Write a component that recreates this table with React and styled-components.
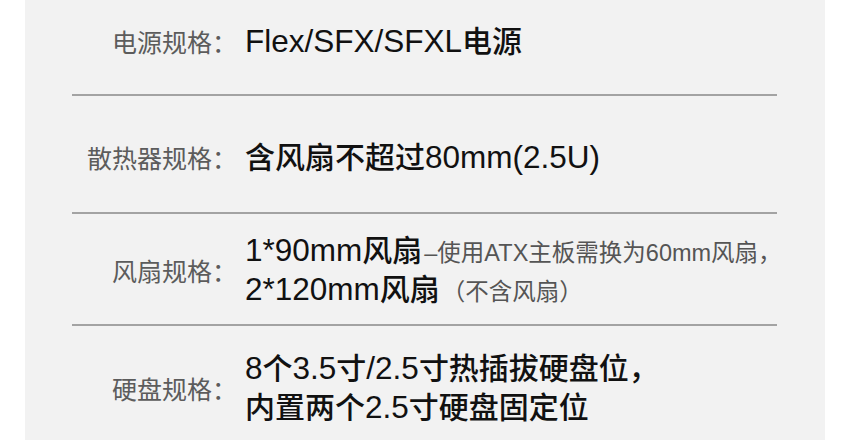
import React from 'react';
import styled, { createGlobalStyle } from 'styled-components';

const GlobalStyle = createGlobalStyle`
    html, body {
        margin: 0;
        padding: 0;
        background: #ffffff;
        height: 440px;
        overflow: hidden;
    }
`;

const Panel = styled.div`
    margin-left: 25px;
    width: 800px;
    height: 440px;
    overflow: hidden;
    background: #f2f2f2;
    padding: 0 48px 0 47px;
    box-sizing: border-box;
    font-family: "Liberation Sans", "Noto Sans CJK SC", sans-serif;
`;

const Row = styled.div`
    display: flex;
    align-items: center;
    padding: ${(p) => p.$top}px 0 ${(p) => p.$bottom}px;
`;

const Label = styled.div`
    width: 165px;
    flex-shrink: 0;
    text-align: right;
    font-size: 25px;
    line-height: 40px;
    color: #5c5c5c;
    font-family: "Noto Sans CJK SC", sans-serif;
`;

const Value = styled.div`
    margin-left: 8px;
    font-size: 30px;
    line-height: 39px;
    font-weight: 500;
    color: #111111;
    white-space: nowrap;
`;

const Line = styled.div`
    white-space: nowrap;
`;

// latin runs are a touch wider in the original than Liberation at 30px
const Latin = styled.span`
    font-size: 1.05em;
`;

const Note = styled.span`
    font-size: 23.5px;
    line-height: 1;
    font-weight: 400;
    color: #555555;
    margin-left: 2px;
`;

const Divider = styled.div`
    height: 2px;
    background: #a3a3a3;
`;

const specs = [
    { label: '电源规格：', lines: [['Flex/SFX/SFXL电源']], top: 21, bottom: 33 },
    { label: '散热器规格：', lines: [['含风扇不超过80mm(2.5U)']], top: 41, bottom: 35 },
    {
        label: '风扇规格：',
        lines: [
            ['1*90mm风扇', '–使用ATX主板需换为60mm风扇，'],
            ['2*120mm风扇', '（不含风扇）'],
        ],
        top: 17,
        bottom: 15,
    },
    {
        label: '硬盘规格：',
        lines: [['8个3.5寸/2.5寸热插拔硬盘位，'], ['内置两个2.5寸硬盘固定位']],
        top: 23,
        bottom: 20,
    },
];

function splitRuns(text) {
    return text
        .split(/([\x20-\x7E]+)/)
        .filter(Boolean)
        .map((part, i) => (/^[\x20-\x7E]+$/.test(part) ? <Latin key={i}>{part}</Latin> : part));
}

function App() {
    return (
        <>
            <GlobalStyle />
            <Panel>
                {specs.map((spec, i) => (
                    <React.Fragment key={spec.label}>
                        {i > 0 && <Divider />}
                        <Row $top={spec.top} $bottom={spec.bottom}>
                            <Label>{spec.label}</Label>
                            <Value>
                                {spec.lines.map(([main, note]) => (
                                    <Line key={main}>
                                        {splitRuns(main)}
                                        {note && <Note>{note}</Note>}
                                    </Line>
                                ))}
                            </Value>
                        </Row>
                    </React.Fragment>
                ))}
            </Panel>
        </>
    );
}

export default App;
